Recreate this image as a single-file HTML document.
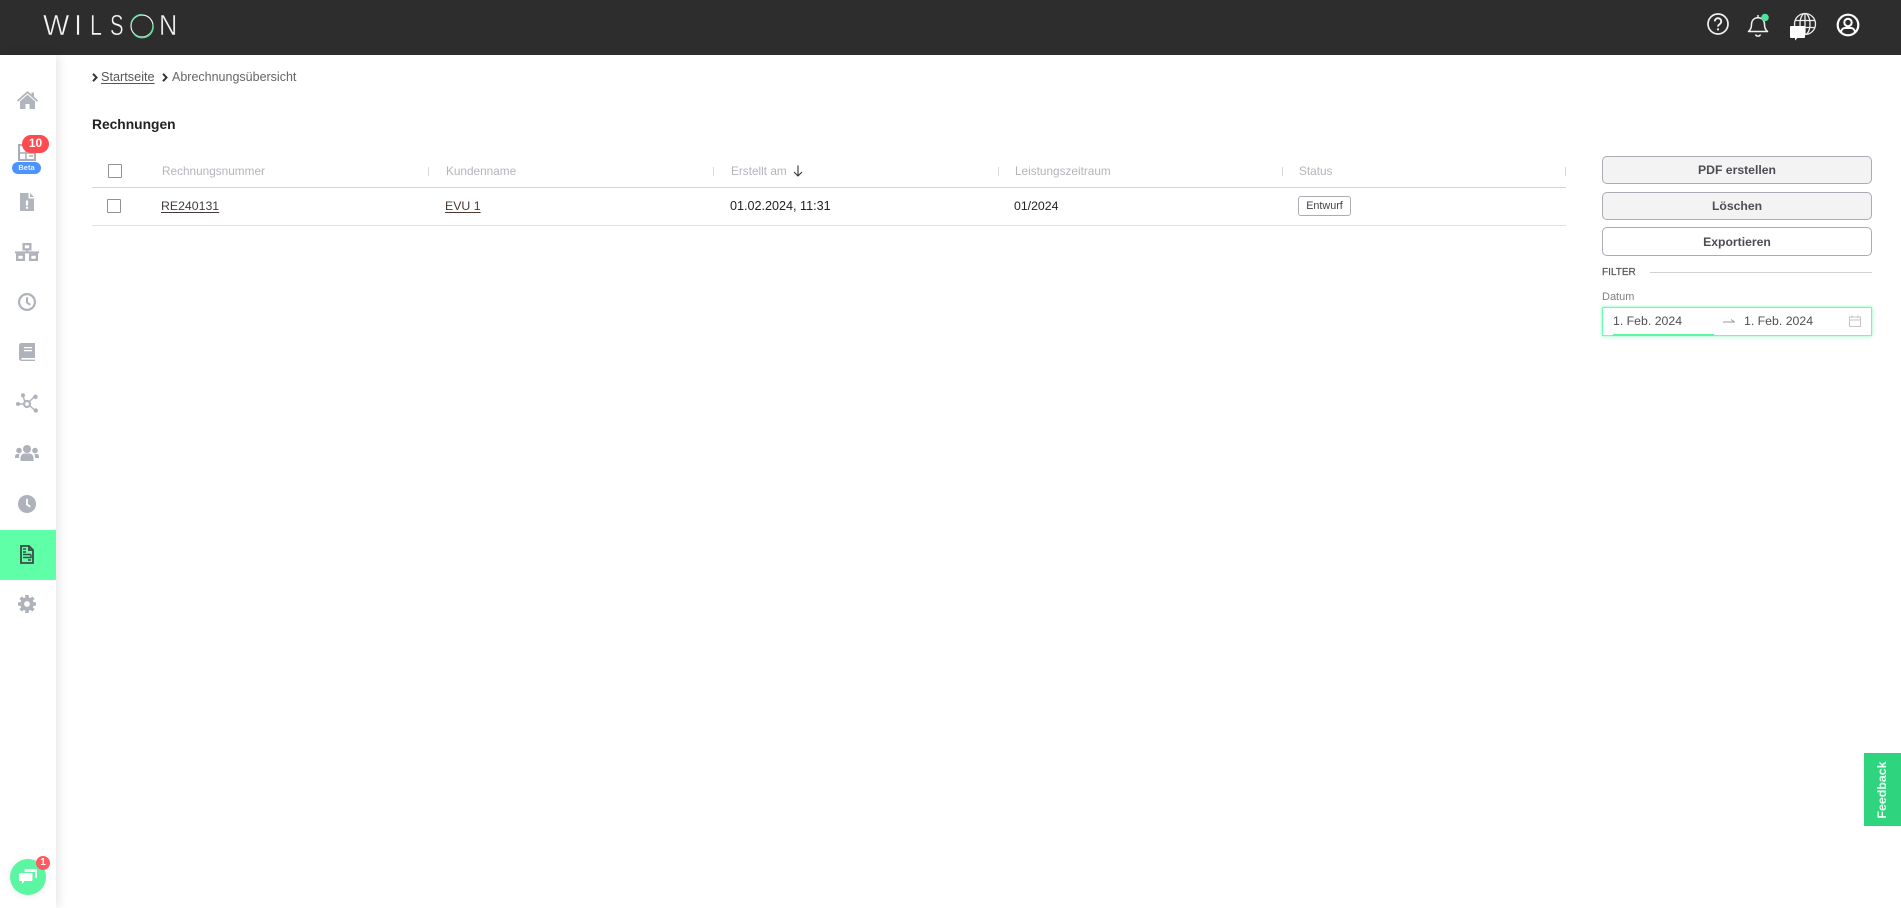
<!DOCTYPE html>
<html lang="de"><head><meta charset="utf-8"><title>Rechnungen</title>
<style>
html,body{margin:0;padding:0;width:1901px;height:908px;overflow:hidden;background:#fff;font-family:"Liberation Sans",sans-serif;color:#333}
.t{position:absolute;white-space:nowrap;line-height:16px;height:16px}
.a{position:absolute}
.h{color:#b3b5ba;font-size:11.8px}
.r{color:#333;font-size:12.3px}
.u{text-decoration:underline;text-underline-offset:2px;text-decoration-thickness:1px}
.s{position:absolute;width:1px;height:9px;top:167px;background:#d6d8db}
.b{position:absolute;left:1602px;width:270px;box-sizing:border-box;border:1px solid #a9acb2;border-radius:5px;text-align:center;font-weight:bold;font-size:12.2px;color:#4d4d55;background:#f3f3f3}
.cb{position:absolute;box-sizing:border-box;width:14px;height:14px;border:1.5px solid #8f9296;border-radius:1px;background:#fff}
.l{position:absolute;top:11px;color:#f4f4f4;font-size:29px;line-height:30px;transform-origin:0 50%;-webkit-text-stroke:.5px #2d2d2d}
svg{position:absolute;display:block;filter:blur(.3px)}
</style></head><body>
<!-- header -->
<div class="a" style="left:0;top:0;width:1901px;height:55px;background:#2d2d2d"></div>
<span class="l" style="left:42.500px;transform:scaleX(.96)">W</span>
<span class="l" style="left:74px;">I</span>
<span class="l" style="left:90px;transform:scaleX(.74)">L</span>
<span class="l" style="left:110px;transform:scaleX(.7)">S</span>
<svg style="left:128px;top:12px" width="28" height="28" viewBox="0 0 28 28"><circle cx="14" cy="14" r="11" fill="none" stroke="#eee" stroke-width="1.2"/><path d="M5 21A11 11 0 0 0 25 14" fill="none" stroke="#4fe39a" stroke-width="1.4" transform="rotate(-8 14 14)"/><path d="M14 2.500A11.500 11.500 0 0 0 3 11" fill="none" stroke="#4fe39a" stroke-width="1.200"/></svg>
<span class="l" style="left:159px;transform:scaleX(.87)">N</span>
<svg style="left:1706px;top:12px" width="24" height="24" viewBox="0 0 24 24" fill="none" stroke="#f2f2f2" stroke-width="1.700"><circle cx="12" cy="12" r="10"/><path d="M8.800 9.400a3.200 3.200 0 1 1 4.900 2.700c-1.100.7-1.700 1.200-1.700 2.500" stroke-width="1.800"/><circle cx="12" cy="17.400" r="1.100" fill="#f2f2f2" stroke="none"/></svg>
<svg style="left:1746px;top:12px" width="24" height="26" viewBox="0 0 24 26" fill="none" stroke="#f2f2f2" stroke-width="1.500"><path d="M2.500 19.500c2-1.600 3-3.500 3-7 0-4 2.500-6.800 6.500-6.800s6.500 2.800 6.500 6.800c0 3.500 1 5.400 3 7z" stroke-linejoin="round"/><path d="M9.500 22.500a2.700 2.700 0 0 0 5 0M12 3v2.500"/><circle cx="19" cy="5.500" r="3.800" fill="#4fe39a" stroke="none"/></svg>
<svg style="left:1793px;top:12px" width="24" height="24" viewBox="0 0 24 24" fill="none" stroke="#efefef" stroke-width="1.300"><circle cx="12" cy="12" r="10.500"/><ellipse cx="12" cy="12" rx="5" ry="10.500"/><path d="M12 1.500v21M2 8.500h20M2 15.500h20"/></svg>
<svg style="left:1789px;top:25px" width="17" height="16" viewBox="0 0 17 16"><path d="M2 1h13a1 1 0 0 1 1 1v10a1 1 0 0 1-1 1H8.500L6 15.500V13H2a1 1 0 0 1-1-1V2a1 1 0 0 1 1-1z" fill="#fff"/></svg>
<svg style="left:1836px;top:13px" width="24" height="24" viewBox="0 0 24 24" fill="none" stroke="#fff" stroke-width="2.200"><circle cx="12" cy="12" r="10.300"/><circle cx="12" cy="9.500" r="3.700" stroke-width="2"/><path d="M5 19c.5-3 2.500-4 4-4h6c1.500 0 3.500 1 4 4" stroke-width="2"/></svg>

<!-- sidebar -->
<div class="a" style="left:0;top:55px;width:56px;height:853px;background:#fff;box-shadow:2px 0 10px rgba(0,0,0,.11)"></div>
<div class="a" style="left:0;top:530px;width:56px;height:50px;background:#5fffa8"></div>
<svg style="left:17px;top:91px" width="21" height="18" viewBox="0 0 21 18" fill="#b1b5bd"><path d="M10.500 0 14.500 3.500V1.500h2.500v4.200l4 3.500-1 1.500-9.500-8.300L1 10.700 0 9.200z"/><path d="M10.500 3.800 18 10.300V18h-5.500v-5h-4v5H3v-7.700z"/></svg>
<svg style="left:18px;top:144px" width="18" height="17" viewBox="0 0 18 17" fill="none" stroke="#a9adb5" stroke-width="2.200"><rect x="1" y="1" width="16" height="15"/><path d="M1 9h16M8 5v11M11 12h4" stroke-width="1.500"/></svg>
<div class="a" style="left:22px;top:135px;width:27px;height:18px;border-radius:9px;background:#ff4b50;color:#fff;font-size:12px;line-height:17px;text-align:center;font-weight:bold">10</div>
<div class="a" style="left:12px;top:162px;width:29px;height:12px;border-radius:6px;background:#4d93ff;color:#e8f1ff;font-size:7.500px;line-height:12px;text-align:center;font-weight:bold">Beta</div>
<svg style="left:20px;top:193px" width="14" height="18" viewBox="0 0 14 18" fill="#b1b5bd"><path fill-rule="evenodd" d="M0 0h8.500v5.500H14V18H0zM5.900 7.500v5h2.200v-5zM5.900 13.700v2.100h2.200v-2.100z"/><path d="M10 0l4 4h-4z"/></svg>
<svg style="left:15px;top:243px" width="24" height="18" viewBox="0 0 24 18" fill="#aeb2ba"><path fill-rule="evenodd" d="M7.500 0h9v7.500h-9zM9.800 2.200v3.100h4.400V2.200z"/><rect x="0" y="8.400" width="24" height="2"/><rect x="11" y="6" width="2" height="3"/><path fill-rule="evenodd" d="M1 10.500h9V18H1zM3.300 12.700v3.100h4.400v-3.100zM14 10.500h9V18h-9zM16.300 12.700v3.100h4.400v-3.100z"/></svg>
<svg style="left:18px;top:293px" width="18" height="18" viewBox="0 0 18 18" fill="none" stroke="#aeb2ba" stroke-width="2.200"><circle cx="9" cy="9" r="7.900"/><path d="M9 4.200V9.500l3.200 2.300" stroke-width="2"/></svg>
<svg style="left:19px;top:343px" width="16" height="18" viewBox="0 0 16 18" fill="#aeb2ba"><path fill-rule="evenodd" d="M2.500 0H16v15H3a.8.8 0 0 0 0 1.600h13V18H2.500A2.500 2.500 0 0 1 0 15.500V2.500A2.500 2.500 0 0 1 2.500 0zM5 4v1.300h8V4zM5 7v1.300h8V7z"/></svg>
<svg style="left:16px;top:393px" width="23" height="20" viewBox="0 0 23 20" fill="none" stroke="#b1b5bd" stroke-width="1.500"><circle cx="11" cy="11" r="3" stroke-width="2.200"/><path d="M9 9 7 3M13 9l5-5M13.500 12.500l5 4.500M8 11H3"/><g fill="#aeb2ba" stroke="none"><circle cx="7" cy="2.200" r="2"/><circle cx="19.500" cy="3.800" r="2.200"/><circle cx="19.800" cy="17.500" r="2.200"/><circle cx="2" cy="11" r="2"/></g></svg>
<svg style="left:15px;top:445px" width="24" height="16" viewBox="0 0 24 16" fill="#aeb2ba"><circle cx="12" cy="4" r="4"/><circle cx="4" cy="5.500" r="2.800"/><circle cx="20" cy="5.500" r="2.800"/><path d="M5.500 16v-3c0-2.500 2-4.500 4-4.500h5c2 0 4 2 4 4.500v3z"/><path d="M4.500 9H2.500C1 9 0 10 0 11.500V13h4c0-1.600.2-3 .5-4zM19.500 9h2c1.500 0 2.500 1 2.500 2.500V13h-4c0-1.600-.2-3-.5-4z"/></svg>
<svg style="left:18px;top:495px" width="18" height="18" viewBox="0 0 18 18"><circle cx="9" cy="9" r="9" fill="#aeb2ba"/><path d="M9 3.800V9.500l3.300 2.300" fill="none" stroke="#fff" stroke-width="1.800"/></svg>
<svg style="left:20px;top:545px" width="14" height="19" viewBox="0 0 14 19" fill="none" stroke="#3c4a46" stroke-width="1.800"><path d="M1 1h8l4 4v13H1z"/><path d="M9 1v4h4"/><path d="M3 4h3M3 7h3M3 9.500h8M3 12.500h8v-3M8 15h3" stroke-width="1.400"/></svg>
<svg style="left:18px;top:595px" width="18" height="18" viewBox="0 0 18 18"><circle cx="9" cy="9" r="4.800" fill="none" stroke="#aeb2ba" stroke-width="3.800"/><g stroke="#aeb2ba" stroke-width="3.500"><path d="M9 0v3M9 15v3M0 9h3M15 9h3M2.600 2.600l2.100 2.100M13.300 13.300l2.100 2.100M2.600 15.400l2.100-2.100M13.300 4.700l2.100-2.100"/></g></svg>
<div class="a" style="left:10px;top:859px;width:36px;height:36px;border-radius:50%;background:#5cf5a2;box-shadow:0 1px 8px rgba(0,0,0,.08)"></div>
<svg style="left:19px;top:869px" width="18" height="16" viewBox="0 0 18 16" fill="#fff"><path d="M6.500 0H17a1 1 0 0 1 1 1v7a1 1 0 0 1-1 1h-1V3H5.500V1a1 1 0 0 1 1-1z"/><path d="M1 4h11.500a1 1 0 0 1 1 1v6a1 1 0 0 1-1 1H5.500L3 15v-3H1a1 1 0 0 1-1-1V5a1 1 0 0 1 1-1z"/></svg>
<div class="a" style="left:36px;top:856px;width:14px;height:14px;border-radius:50%;background:#ff5a5f;color:#fff;font-size:10px;line-height:14px;text-align:center;font-weight:bold">1</div>

<!-- breadcrumb -->
<svg style="left:92px;top:73px" width="6" height="9" viewBox="0 0 6 9" fill="none" stroke="#333" stroke-width="2"><path d="M1 .8 4.500 4.500 1 8.200"/></svg>
<span class="t u" style="left:101px;top:69px;font-size:12.700px;color:#555">Startseite</span>
<svg style="left:162px;top:73px" width="6" height="9" viewBox="0 0 6 9" fill="none" stroke="#333" stroke-width="2"><path d="M1 .8 4.500 4.500 1 8.200"/></svg>
<span class="t" style="left:172px;top:69px;font-size:12.500px;color:#666">Abrechnungsübersicht</span>
<span class="t" style="left:92px;top:117px;font-size:13.800px;font-weight:bold;color:#222">Rechnungen</span>

<!-- table -->
<div class="cb" style="left:108px;top:164px"></div>
<span class="t h" style="left:162px;top:163px">Rechnungsnummer</span>
<i class="s" style="left:428px"></i>
<span class="t h" style="left:446px;top:163px">Kundenname</span>
<i class="s" style="left:713px"></i>
<span class="t h" style="left:731px;top:163px">Erstellt am</span>
<svg style="left:793px;top:165px" width="10" height="12" viewBox="0 0 10 12" fill="none" stroke="#333" stroke-width="1.100"><path d="M5 .5V11M1 7l4 4 4-4"/></svg>
<i class="s" style="left:998px"></i>
<span class="t h" style="left:1015px;top:163px">Leistungszeitraum</span>
<i class="s" style="left:1282px"></i>
<span class="t h" style="left:1299px;top:163px">Status</span>
<i class="s" style="left:1565px"></i>
<div class="a" style="left:92px;top:187px;width:1474px;height:1px;background:#d3d5d8"></div>
<div class="cb" style="left:107px;top:199px"></div>
<span class="t r u" style="left:161px;top:198px;color:#443c3c">RE240131</span>
<span class="t r u" style="left:445px;top:198px;color:#4a3a30">EVU 1</span>
<span class="t r" style="left:730px;top:198px;color:#222;font-size:12.600px">01.02.2024, 11:31</span>
<span class="t r" style="left:1014px;top:198px;color:#222">01/2024</span>
<div class="a" style="left:1298px;top:196px;width:53px;height:20px;box-sizing:border-box;border:1px solid #a9acb0;border-radius:3px;font-size:10.800px;line-height:18px;text-align:center;color:#444">Entwurf</div>
<div class="a" style="left:92px;top:225px;width:1474px;height:1px;background:#dfe0e3"></div>

<!-- right panel -->
<div class="b" style="top:156px;height:28px;line-height:26px">PDF erstellen</div>
<div class="b" style="top:192px;height:28px;line-height:26px">Löschen</div>
<div class="b" style="top:227px;height:29px;line-height:28px;background:#fff">Exportieren</div>
<span class="t" style="left:1602px;top:265px;font-size:10px;color:#555;-webkit-text-stroke:.2px #555">FILTER</span>
<div class="a" style="left:1650px;top:272px;width:222px;height:1px;background:#cfd1d4"></div>
<span class="t" style="left:1602px;top:289px;font-size:11px;color:#808080">Datum</span>
<div class="a" style="left:1602px;top:307px;width:270px;height:29px;box-sizing:border-box;border:1px solid #6dfcaf;box-shadow:0 0 3px rgba(95,255,168,.9)"></div>
<span class="t" style="left:1613px;top:313px;font-size:12.300px;color:#4f4f55">1. Feb. 2024</span>
<svg style="left:1723px;top:317px" width="12" height="8" viewBox="0 0 12 8" fill="none" stroke="#9a9a9a" stroke-width="1"><path d="M0 5h11.500L8 2.500"/></svg>
<span class="t" style="left:1744px;top:313px;font-size:12.300px;color:#4f4f55">1. Feb. 2024</span>
<svg style="left:1849px;top:315px" width="12" height="12" viewBox="0 0 12 12" fill="none" stroke="#c4c5c7" stroke-width="1"><rect x=".5" y="2" width="11" height="9.500"/><path d="M.5 5h11M3 .5V3M9 .5V3"/></svg>
<div class="a" style="left:1613px;top:334px;width:101px;height:2px;background:#5cf5a2"></div>

<!-- feedback -->
<div class="a" style="left:1864px;top:753px;width:37px;height:73px;background:#2fd47e"></div>
<span class="a" style="left:1882px;top:790px;transform:translate(-50%,-50%) rotate(-90deg);color:#eafff3;font-size:12.400px;line-height:16px;white-space:nowrap;font-weight:bold">Feedback</span>
</body></html>
